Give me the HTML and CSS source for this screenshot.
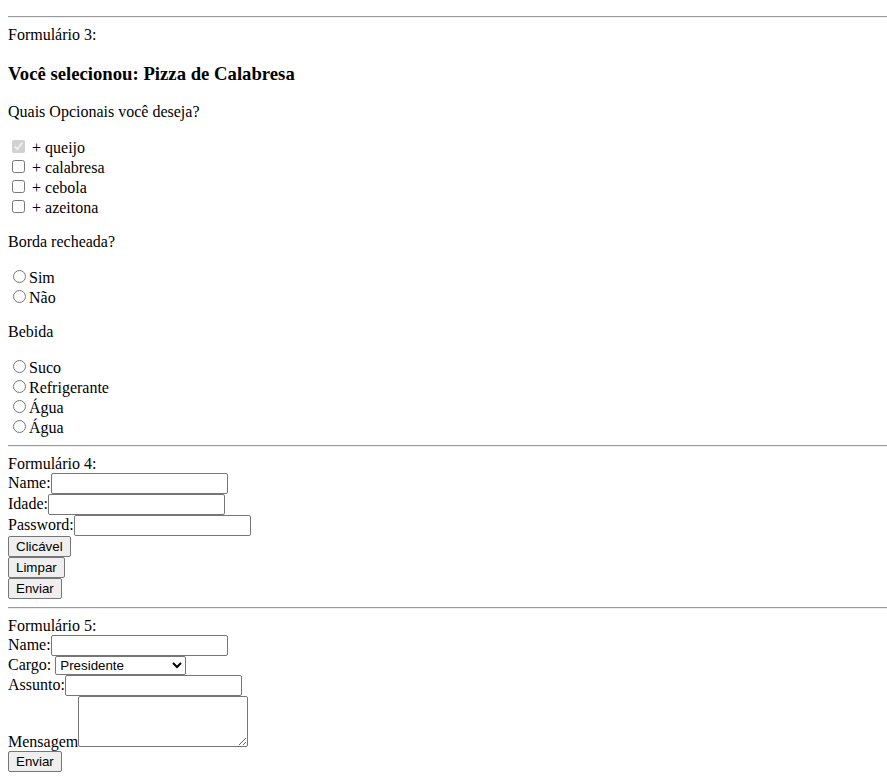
FILE: index.html
```html
<!DOCTYPE html>
<html lang="pt-BR">
<head>
<meta charset="utf-8">
<title>Formulários</title>
<link rel="stylesheet" href="styles.css">
</head>
<body>
<hr>
<form class="form">
Formulário 3:
<h3>Você selecionou: Pizza de Calabresa</h3>
<p>Quais Opcionais você deseja?</p>
<div>
<input type="checkbox" checked disabled> + queijo<br>
<input type="checkbox"> + calabresa<br>
<input type="checkbox"> + cebola<br>
<input type="checkbox"> + azeitona
</div>
<p>Borda recheada?</p>
<div>
<input type="radio" name="borda">Sim<br>
<input type="radio" name="borda">Não
</div>
<p>Bebida</p>
<div>
<input type="radio" name="bebida">Suco<br>
<input type="radio" name="bebida">Refrigerante<br>
<input type="radio" name="bebida">Água<br>
<input type="radio" name="bebida">Água
</div>
</form>
<hr>
<form class="form">
Formulário 4:<br>
<label>Name:</label><input type="text"><br>
<label>Idade:</label><input type="number" class="num"><br>
<label>Password:</label><input type="password"><br>
<input type="button" value="Clicável"><br>
<input type="reset" value="Limpar"><br>
<input type="submit" value="Enviar">
</form>
<hr>
<form class="form">
Formulário 5:<br>
<label>Name:</label><input type="text"><br>
<label>Cargo:</label> <select class="cargo"><option>Presidente</option><option>Diretor</option></select><br>
<label>Assunto:</label><input type="text"><br>
<label>Mensagem</label><textarea class="msg"></textarea><br>
<input type="submit" value="Enviar">
</form>
</body>
</html>
```
FILE: styles.css
```css
html {
  background: #fff;
}
body {
  margin: 8px 0 8px 8px;
  display: flow-root;
  font-family: "Liberation Serif", "Times New Roman", serif;
  font-size: 16px;
  color: #000;
}
hr {
  margin: 8px 0;
  border: 0;
  border-top: 1px solid #9a9a9a;
  border-bottom: 1px solid #eeeeee;
  height: 0;
}
.form {
  margin: 0;
}
h3 {
  font-size: 1.17em;
  margin: 1em 0;
  font-weight: bold;
}
p {
  margin: 1em 0;
}
input, select, textarea, button {
  font-family: "Liberation Sans", Arial, sans-serif;
  font-size: 13.333px;
}
input[type="text"], input[type="password"], input[type="number"] {
  width: 177px;
  height: 21px;
  box-sizing: border-box;
  border: 1px solid #767676;
  border-radius: 2px;
  padding: 1px 2px;
  margin: 0;
  background: #fff;
}
.num {
  width: 177px;
}
input[type="checkbox"] {
  margin: 3px 3px 3px 4px;
  width: 13px;
  height: 13px;
}
input[type="radio"] {
  margin: 3px 3px 0 5px;
  width: 13px;
  height: 13px;
}
input[type="button"], input[type="reset"], input[type="submit"] {
  height: 21px;
  padding: 1px 7px;
  margin: 0;
  border: 1px solid #767676;
  border-radius: 2px;
  background: #efefef;
  color: #000;
}
.cargo {
  width: 131px;
  height: 19px;
  border: 1px solid #767676;
  border-radius: 2px;
  background: #fff;
  padding: 0;
  margin: 0;
}
.msg {
  width: 170px;
  height: 51px;
  box-sizing: border-box;
  border: 1px solid #767676;
  border-radius: 2px;
  padding: 2px;
  margin: 0;
  resize: both;
  vertical-align: baseline;
}
```
